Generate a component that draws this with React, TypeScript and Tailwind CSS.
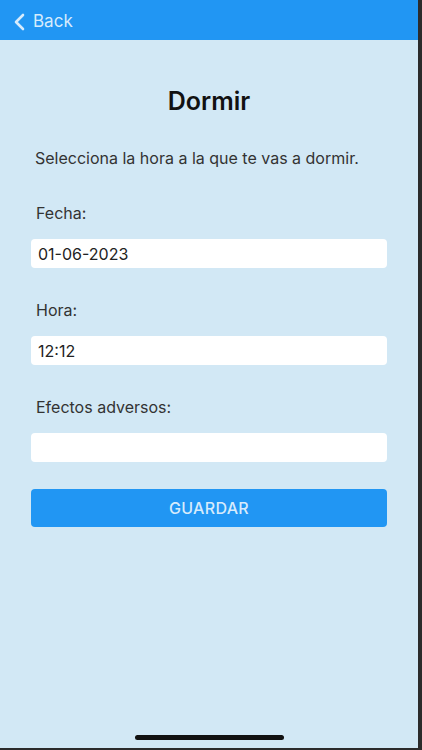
import React from 'react';

const Field: React.FC<{ label: string; value: string }> = ({ label, value }) => (
  <div className="flex flex-col">
    <label className="text-[16px] text-[#333] leading-[20px] pl-[5px]">{label}</label>
    <div className="mt-[16px] h-[29px] bg-white rounded-[4px] flex items-center px-[7px] text-[16px] text-[#222]">
      {value}
    </div>
  </div>
);

const App: React.FC = () => {
  return (
    <div className="w-[422px] h-[750px] bg-[#2b2b2b] overflow-hidden" style={{ fontFamily: 'Inter, "Noto Sans", sans-serif' }}>
      <div className="w-[418px] h-[748px] bg-[#d2e8f5] flex flex-col relative">
        <div className="h-[40px] bg-[#2196f3] flex items-center pl-[12px] pt-[3px] shrink-0">
          <svg width="14" height="20" viewBox="0 0 14 20" fill="none">
            <path d="M11 3 L4 10 L11 17" stroke="#d6ebfc" strokeWidth="2.6" strokeLinecap="round" strokeLinejoin="round" />
          </svg>
          <span className="ml-[7px] text-[17px] text-[#d6ebfc]">Back</span>
        </div>
        <div className="px-[31px] flex flex-col">
          <h1 className="mt-[47px] text-center text-[25px] font-semibold text-[#111] leading-[28px]">Dormir</h1>
          <p className="mt-[33px] pl-[4px] text-[16px] text-[#333] leading-[20px]">
            Selecciona la hora a la que te vas a dormir.
          </p>
          <div className="mt-[35px] flex flex-col gap-[32px]">
            <Field label="Fecha:" value="01-06-2023" />
            <Field label="Hora:" value="12:12" />
            <Field label="Efectos adversos:" value="" />
          </div>
          <button className="mt-[27px] h-[38px] bg-[#2196f3] rounded-[4px] text-[16px] font-medium text-[#d6ebfc] tracking-[0.3px]">
            GUARDAR
          </button>
        </div>
        <div className="absolute bottom-[8px] left-[135px] w-[149px] h-[5px] rounded-full bg-[#111]" />
      </div>
    </div>
  );
};

export default App;
